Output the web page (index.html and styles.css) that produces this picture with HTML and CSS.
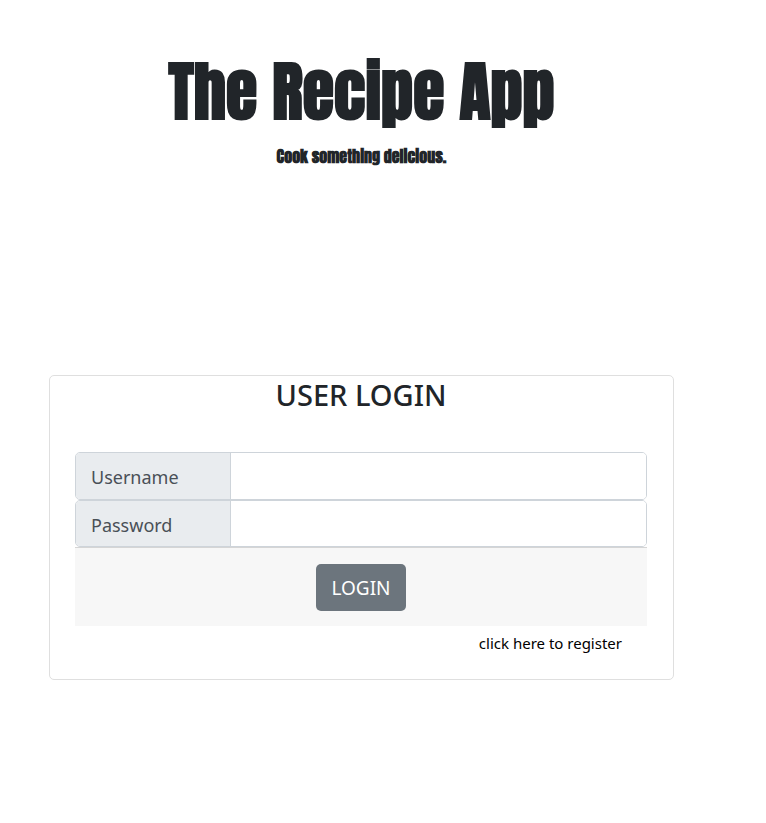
FILE: index.html
```html
<!DOCTYPE html>
<html lang="en">
<head>
<meta charset="utf-8">
<meta name="viewport" content="width=device-width, initial-scale=1">
<title>The Recipe App</title>
<link rel="stylesheet" href="styles.css">
</head>
<body>
<main class="page">
  <header class="banner">
    <h1 class="title">The Recipe App</h1>
    <p class="tagline">Cook something delicious.</p>
  </header>
  <form class="card">
    <h2 class="card-title">USER LOGIN</h2>
    <div class="field">
      <label class="field-label" for="username">Username</label>
      <input class="field-input" id="username" type="text">
    </div>
    <div class="field">
      <label class="field-label" for="password">Password</label>
      <input class="field-input" id="password" type="password">
    </div>
    <div class="card-footer">
      <button class="login" type="submit">LOGIN</button>
    </div>
    <a class="register" href="#register">click here to register</a>
  </form>
</main>
</body>
</html>
```
FILE: styles.css
```css
* {
  box-sizing: border-box;
}

body {
  margin: 0;
  background: #fff;
  color: #212529;
  font-family: "Segoe UI", "Noto Sans", "Open Sans", sans-serif;
  font-size: 16px;
  line-height: 24px;
}

.page {
  padding: 44px 92px 56px 49px;
}

.banner {
  margin-bottom: 207px;
  font-family: Impact, Anton, Roboto, sans-serif;
  text-align: center;
}

.title {
  margin: 0 0 4px;
  font-size: 64px;
  font-weight: 700;
  line-height: 96px;
}

.tagline {
  margin: 0;
  font-size: 16px;
  font-weight: 700;
}

.card {
  display: flex;
  flex-direction: column;
  padding: 0 26px 24px 25px;
  border: 1px solid #dfdfdf;
  border-radius: 5px;
}

.card-title {
  margin: 0 0 38px;
  font-size: 29px;
  font-weight: 500;
  line-height: 38px;
  text-align: center;
}

.field {
  display: flex;
  height: 48px;
  border: 1px solid #ced4da;
  border-radius: 5px;
  overflow: hidden;
}

.field + .field {
  height: 47px;
}

.field-label {
  flex: 0 0 155px;
  padding: 0 15px;
  border-right: 1px solid #ced4da;
  background: #e9ecef;
  color: #495057;
  font-size: 18px;
  line-height: 48px;
}

.field-input {
  flex: 1;
  min-width: 0;
  padding: 0 15px;
  border: 0;
  background: #fff;
  color: #495057;
  font: inherit;
  font-size: 18px;
}

.card-footer {
  padding: 16px 24px 15px;
  border-top: 1px solid #d5d5d5;
  background: #f7f7f7;
  text-align: center;
}

.login {
  display: block;
  height: 47px;
  margin: 0 auto;
  padding: 0 15px;
  border: 0;
  border-radius: 5px;
  background: #6c757d;
  color: #fff;
  font: inherit;
  font-size: 19px;
}

.register {
  align-self: flex-end;
  margin: 5px 25px 0 0;
  color: #000;
  font-size: 15px;
  text-decoration: none;
}
```
